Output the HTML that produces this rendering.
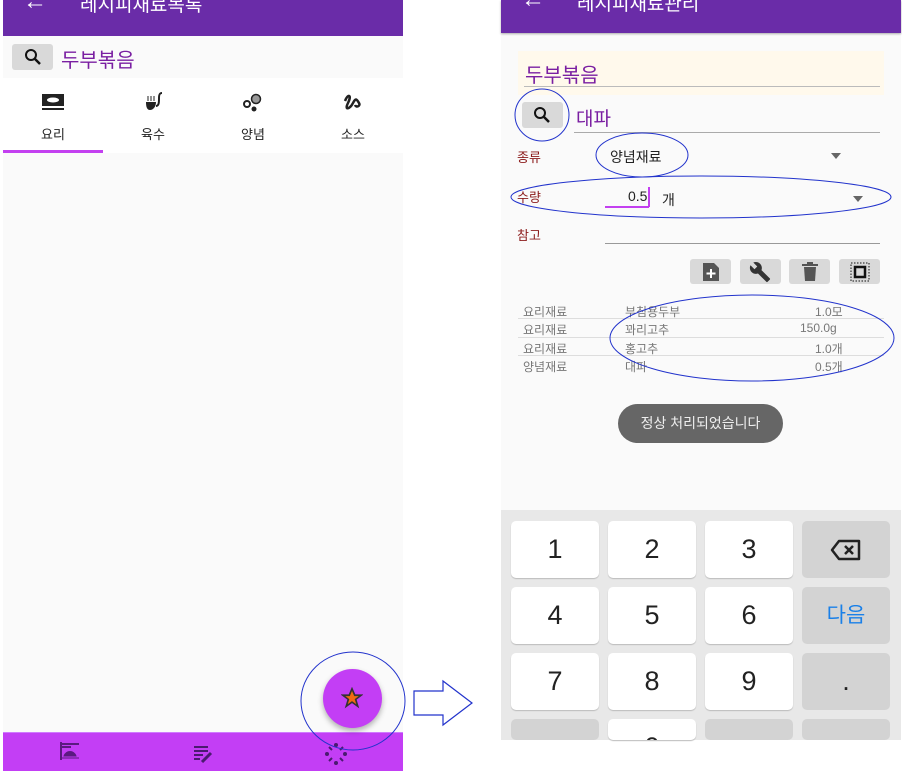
<!DOCTYPE html>
<html><head><meta charset="utf-8"><style>
*{margin:0;padding:0;box-sizing:border-box}
body{width:902px;height:773px;background:#fff;position:relative;overflow:hidden;font-family:"Liberation Sans","Noto Sans CJK KR",sans-serif}
.a{position:absolute}
.hdr{background:#6a2ca8;color:#fff;font-size:19px;overflow:hidden}
.key{position:absolute;width:88px;height:57px;background:#fff;border-radius:5px;box-shadow:0 1px 1px #bbb;font-size:27px;color:#222;text-align:center;line-height:57px}
.g{background:#d3d3d3;box-shadow:none}
.tab{position:absolute;top:78px;width:100px;height:75px;text-align:center;font-size:13px;color:#222}
.tbl{position:absolute;font-size:12px;color:#777}
.btn{position:absolute;top:259px;width:41px;height:25px;background:#d9d9d9;border-radius:3px}
</style></head><body>
<!-- LEFT -->
<div class="a" style="left:3px;top:0;width:400px;height:771px;background:#fafafa"></div>
<div class="a hdr" style="left:3px;top:0;width:400px;height:36px"><span class="a" style="left:20px;top:-12px;font-size:24px">←</span><span class="a" style="left:77px;top:-10px">레시피재료목록</span></div>
<div class="a" style="left:12px;top:44px;width:41px;height:26px;background:#d9d9d9;border-radius:3px"><svg class="a" style="left:12px;top:4px" width="18" height="18" viewBox="0 0 18 18"><circle cx="7" cy="7" r="5" fill="none" stroke="#111" stroke-width="2"/><path d="M11 11l5 5" stroke="#111" stroke-width="2.5"/></svg></div>
<div class="a" style="left:61px;top:44px;font-size:20px;color:#7a1fa2">두부볶음</div>
<div class="a" style="left:3px;top:78px;width:400px;height:75px;background:#fff"></div>
<div class="tab" style="left:3px"><svg class="a" style="left:38px;top:15px" width="24" height="20"><rect x="1" y="1" width="22" height="12" fill="#222"/><ellipse cx="12" cy="7" rx="6" ry="2.5" fill="#fff"/><rect x="1" y="15" width="22" height="2" fill="#222"/></svg><div class="a" style="left:0;width:100px;top:46px">요리</div></div>
<div class="tab" style="left:103px"><svg class="a" style="left:40px;top:14px" width="20" height="22"><path d="M3 10h10c0 5-3 8-6 8s-4-3-4-8z" fill="#222"/><path d="M13 14c3 0 3-4 3-8s1-5 3-5" fill="none" stroke="#222" stroke-width="2"/><path d="M5 4v5M8 4v5M11 4v5" stroke="#222"/></svg><div class="a" style="left:0;width:100px;top:46px">육수</div></div>
<div class="tab" style="left:203px"><svg class="a" style="left:39px;top:15px" width="22" height="20"><circle cx="5" cy="11" r="3" fill="none" stroke="#222" stroke-width="2"/><circle cx="14" cy="6" r="4.5" fill="#999" stroke="#222" stroke-width="1.5"/><circle cx="12" cy="16" r="2.5" fill="#222"/></svg><div class="a" style="left:0;width:100px;top:46px">양념</div></div>
<div class="tab" style="left:303px"><svg class="a" style="left:40px;top:15px" width="22" height="20"><path d="M2 8c3-8 7-6 3 2s2 6 5 0 4-3 6 0-3 5-4 2" fill="none" stroke="#222" stroke-width="2.5"/></svg><div class="a" style="left:0;width:100px;top:46px">소스</div></div>
<div class="a" style="left:3px;top:150px;width:100px;height:3px;background:#c340f0"></div>
<div class="a" style="left:3px;top:732px;width:400px;height:39px;background:#c33ef5;border-top:1px solid #d07aff"></div>
<svg class="a" style="left:58px;top:740px" width="24" height="24"><path d="M3 2v18M3 4h18M3 7h10" stroke="#5a1a80" stroke-width="2"/><path d="M3 18h18M6 16c2-6 10-6 12 0z" fill="#5a1a80" stroke="#5a1a80"/></svg>
<svg class="a" style="left:192px;top:744px" width="22" height="20"><path d="M2 3h14M2 7h14M2 11h9M2 15h6" stroke="#4a1a70" stroke-width="2"/><path d="M10 18l9-9" stroke="#4a1a70" stroke-width="3"/></svg>
<svg class="a" style="left:324px;top:742px" width="24" height="24"><g fill="#4a1a70"><circle cx="12" cy="3" r="2"/><circle cx="12" cy="21" r="2"/><circle cx="3" cy="12" r="2"/><circle cx="21" cy="12" r="2"/></g><path d="M5 5l3 3M19 5l-3 3M5 19l3-3M19 19l-3-3" stroke="#4a1a70" stroke-width="2"/></svg>
<div class="a" style="left:323px;top:669px;width:59px;height:59px;border-radius:50%;background:#c33ef5;box-shadow:0 3px 6px rgba(0,0,0,.3)"></div>
<svg class="a" style="left:341px;top:687px" width="22" height="22" viewBox="0 0 24 24"><path d="M12 2l3 7h7l-6 4.5 2.3 7.5L12 16.5 5.7 21 8 13.5 2 9h7z" fill="#f26a10" stroke="#333" stroke-width="1.8"/></svg>
<svg class="a" style="left:300px;top:650px" width="110" height="110"><ellipse cx="53" cy="51" rx="52" ry="49" fill="none" stroke="#2233cc" stroke-width="1"/></svg>
<svg class="a" style="left:410px;top:678px" width="70" height="50"><path d="M4 13h29V3l29 22-29 22V37H4z" fill="#fff" stroke="#2233cc" stroke-width="1.2"/></svg>
<!-- RIGHT -->
<div class="a" style="left:501px;top:0;width:400px;height:740px;background:#fafafa"></div>
<div class="a hdr" style="left:501px;top:0;width:400px;height:33px;box-shadow:0 1px 2px #aaa"><span class="a" style="left:20px;top:-14px;font-size:24px">←</span><span class="a" style="left:76px;top:-11px">레시피재료관리</span></div>
<div class="a" style="left:518px;top:51px;width:366px;height:44px;background:#fff9ec"></div>
<div class="a" style="left:525px;top:59px;font-size:20px;color:#7a1fa2">두부볶음</div>
<div class="a" style="left:524px;top:86px;width:356px;height:1px;background:#bbb"></div>
<div class="a" style="left:522px;top:102px;width:41px;height:26px;background:#d9d9d9;border-radius:3px"><svg class="a" style="left:11px;top:4px" width="18" height="18" viewBox="0 0 18 18"><circle cx="7" cy="7" r="5" fill="none" stroke="#111" stroke-width="2"/><path d="M11 11l5 5" stroke="#111" stroke-width="2.5"/></svg></div>
<div class="a" style="left:576px;top:104px;font-size:19px;color:#7a1fa2">대파</div>
<div class="a" style="left:574px;top:132px;width:306px;height:1px;background:#aaa"></div>
<div class="a" style="left:517px;top:147px;font-size:13px;color:#8b1a1a">종류</div>
<div class="a" style="left:610px;top:147px;font-size:14px;color:#222">양념재료</div>
<div class="a" style="left:831px;top:153px;border:5px solid transparent;border-top:6px solid #666"></div>
<div class="a" style="left:517px;top:187px;font-size:13px;color:#8b1a1a">수량</div>
<div class="a" style="left:628px;top:188px;font-size:14px;color:#222">0.5</div>
<div class="a" style="left:648px;top:187px;width:2px;height:20px;background:#c340f0"></div>
<div class="a" style="left:605px;top:206px;width:44px;height:2px;background:#c340f0"></div>
<div class="a" style="left:662px;top:190px;font-size:14px;color:#222">개</div>
<div class="a" style="left:853px;top:196px;border:5px solid transparent;border-top:6px solid #666"></div>
<div class="a" style="left:517px;top:225px;font-size:13px;color:#8b1a1a">참고</div>
<div class="a" style="left:605px;top:243px;width:275px;height:1px;background:#999"></div>
<div class="btn" style="left:690px"><svg class="a" style="left:12px;top:3px" width="18" height="20"><path d="M1 1h11l5 5v13H1z" fill="#555"/><path d="M9 7v9M4.5 11.5h9" stroke="#fff" stroke-width="2"/></svg></div>
<div class="btn" style="left:740px"><svg class="a" style="left:9px;top:2px" width="22" height="22" viewBox="0 0 24 24"><path d="M22.7 19l-9.1-9.1c.9-2.3.4-5-1.5-6.9-2-2-5-2.4-7.4-1.3L9 6 6 9 1.6 4.7C.4 7.1.9 10.1 2.9 12.1c1.9 1.9 4.6 2.4 6.9 1.5l9.1 9.1c.4.4 1 .4 1.4 0l2.3-2.3c.5-.4.5-1.1.1-1.4z" fill="#333"/></svg></div>
<div class="btn" style="left:789px"><svg class="a" style="left:13px;top:3px" width="16" height="20"><path d="M0 3h16M5 1h6" stroke="#555" stroke-width="2"/><path d="M2 5h12l-1 14H3z" fill="#555"/></svg></div>
<div class="btn" style="left:839px"><svg class="a" style="left:11px;top:3px" width="20" height="20"><rect x="1" y="1" width="18" height="18" fill="none" stroke="#111" stroke-dasharray="1.5 1.5"/><rect x="5" y="5" width="10" height="10" fill="none" stroke="#111" stroke-width="2.5"/></svg></div>
<div class="tbl" style="left:523px;top:303px">요리재료</div><div class="tbl" style="left:625px;top:303px">부침용두부</div><div class="tbl" style="left:815px;top:303px">1.0모</div>
<div class="tbl" style="left:523px;top:321px">요리재료</div><div class="tbl" style="left:625px;top:321px">꽈리고추</div><div class="tbl" style="left:800px;top:321px">150.0g</div>
<div class="tbl" style="left:523px;top:340px">요리재료</div><div class="tbl" style="left:625px;top:340px">홍고추</div><div class="tbl" style="left:815px;top:340px">1.0개</div>
<div class="tbl" style="left:523px;top:358px">양념재료</div><div class="tbl" style="left:625px;top:358px">대파</div><div class="tbl" style="left:815px;top:358px">0.5개</div>
<div class="a" style="left:518px;top:318px;width:366px;height:1px;background:#ddd"></div>
<div class="a" style="left:518px;top:337px;width:366px;height:1px;background:#ddd"></div>
<div class="a" style="left:518px;top:355px;width:366px;height:1px;background:#ddd"></div>
<div class="a" style="left:618px;top:404px;width:165px;height:39px;background:#666;border-radius:20px;color:#eee;font-size:14px;text-align:center;line-height:39px">정상 처리되었습니다</div>
<div class="a" style="left:501px;top:510px;width:400px;height:230px;background:#e8e8e8"></div>
<div class="key" style="left:511px;top:521px">1</div><div class="key" style="left:608px;top:521px">2</div><div class="key" style="left:705px;top:521px">3</div>
<div class="key g" style="left:802px;top:521px"><svg class="a" style="left:28px;top:18px" width="32" height="22"><path d="M9 2h20v18H9L2 11z" fill="none" stroke="#222" stroke-width="2.5" stroke-linejoin="round"/><path d="M15 7l8 8M23 7l-8 8" stroke="#222" stroke-width="2.5"/></svg></div>
<div class="key" style="left:511px;top:587px">4</div><div class="key" style="left:608px;top:587px">5</div><div class="key" style="left:705px;top:587px">6</div>
<div class="key g" style="left:802px;top:587px;color:#1a80e8;font-size:21px">다음</div>
<div class="key" style="left:511px;top:653px">7</div><div class="key" style="left:608px;top:653px">8</div><div class="key" style="left:705px;top:653px">9</div>
<div class="key g" style="left:802px;top:653px">.</div>
<div class="key g" style="left:511px;top:719px;height:21px"></div>
<div class="key" style="left:608px;top:719px;height:21px;overflow:hidden;line-height:57px">0</div>
<div class="key g" style="left:705px;top:719px;height:21px"></div>
<div class="key g" style="left:802px;top:719px;height:21px"></div>
<svg class="a" style="left:0;top:0" width="902" height="773"><g fill="none" stroke="#2233cc" stroke-width="1"><ellipse cx="542" cy="115" rx="27" ry="26"/><ellipse cx="642" cy="155" rx="46" ry="22"/><ellipse cx="701" cy="197" rx="190" ry="21"/><ellipse cx="752" cy="338" rx="142" ry="43"/></g></svg>
</body></html>
